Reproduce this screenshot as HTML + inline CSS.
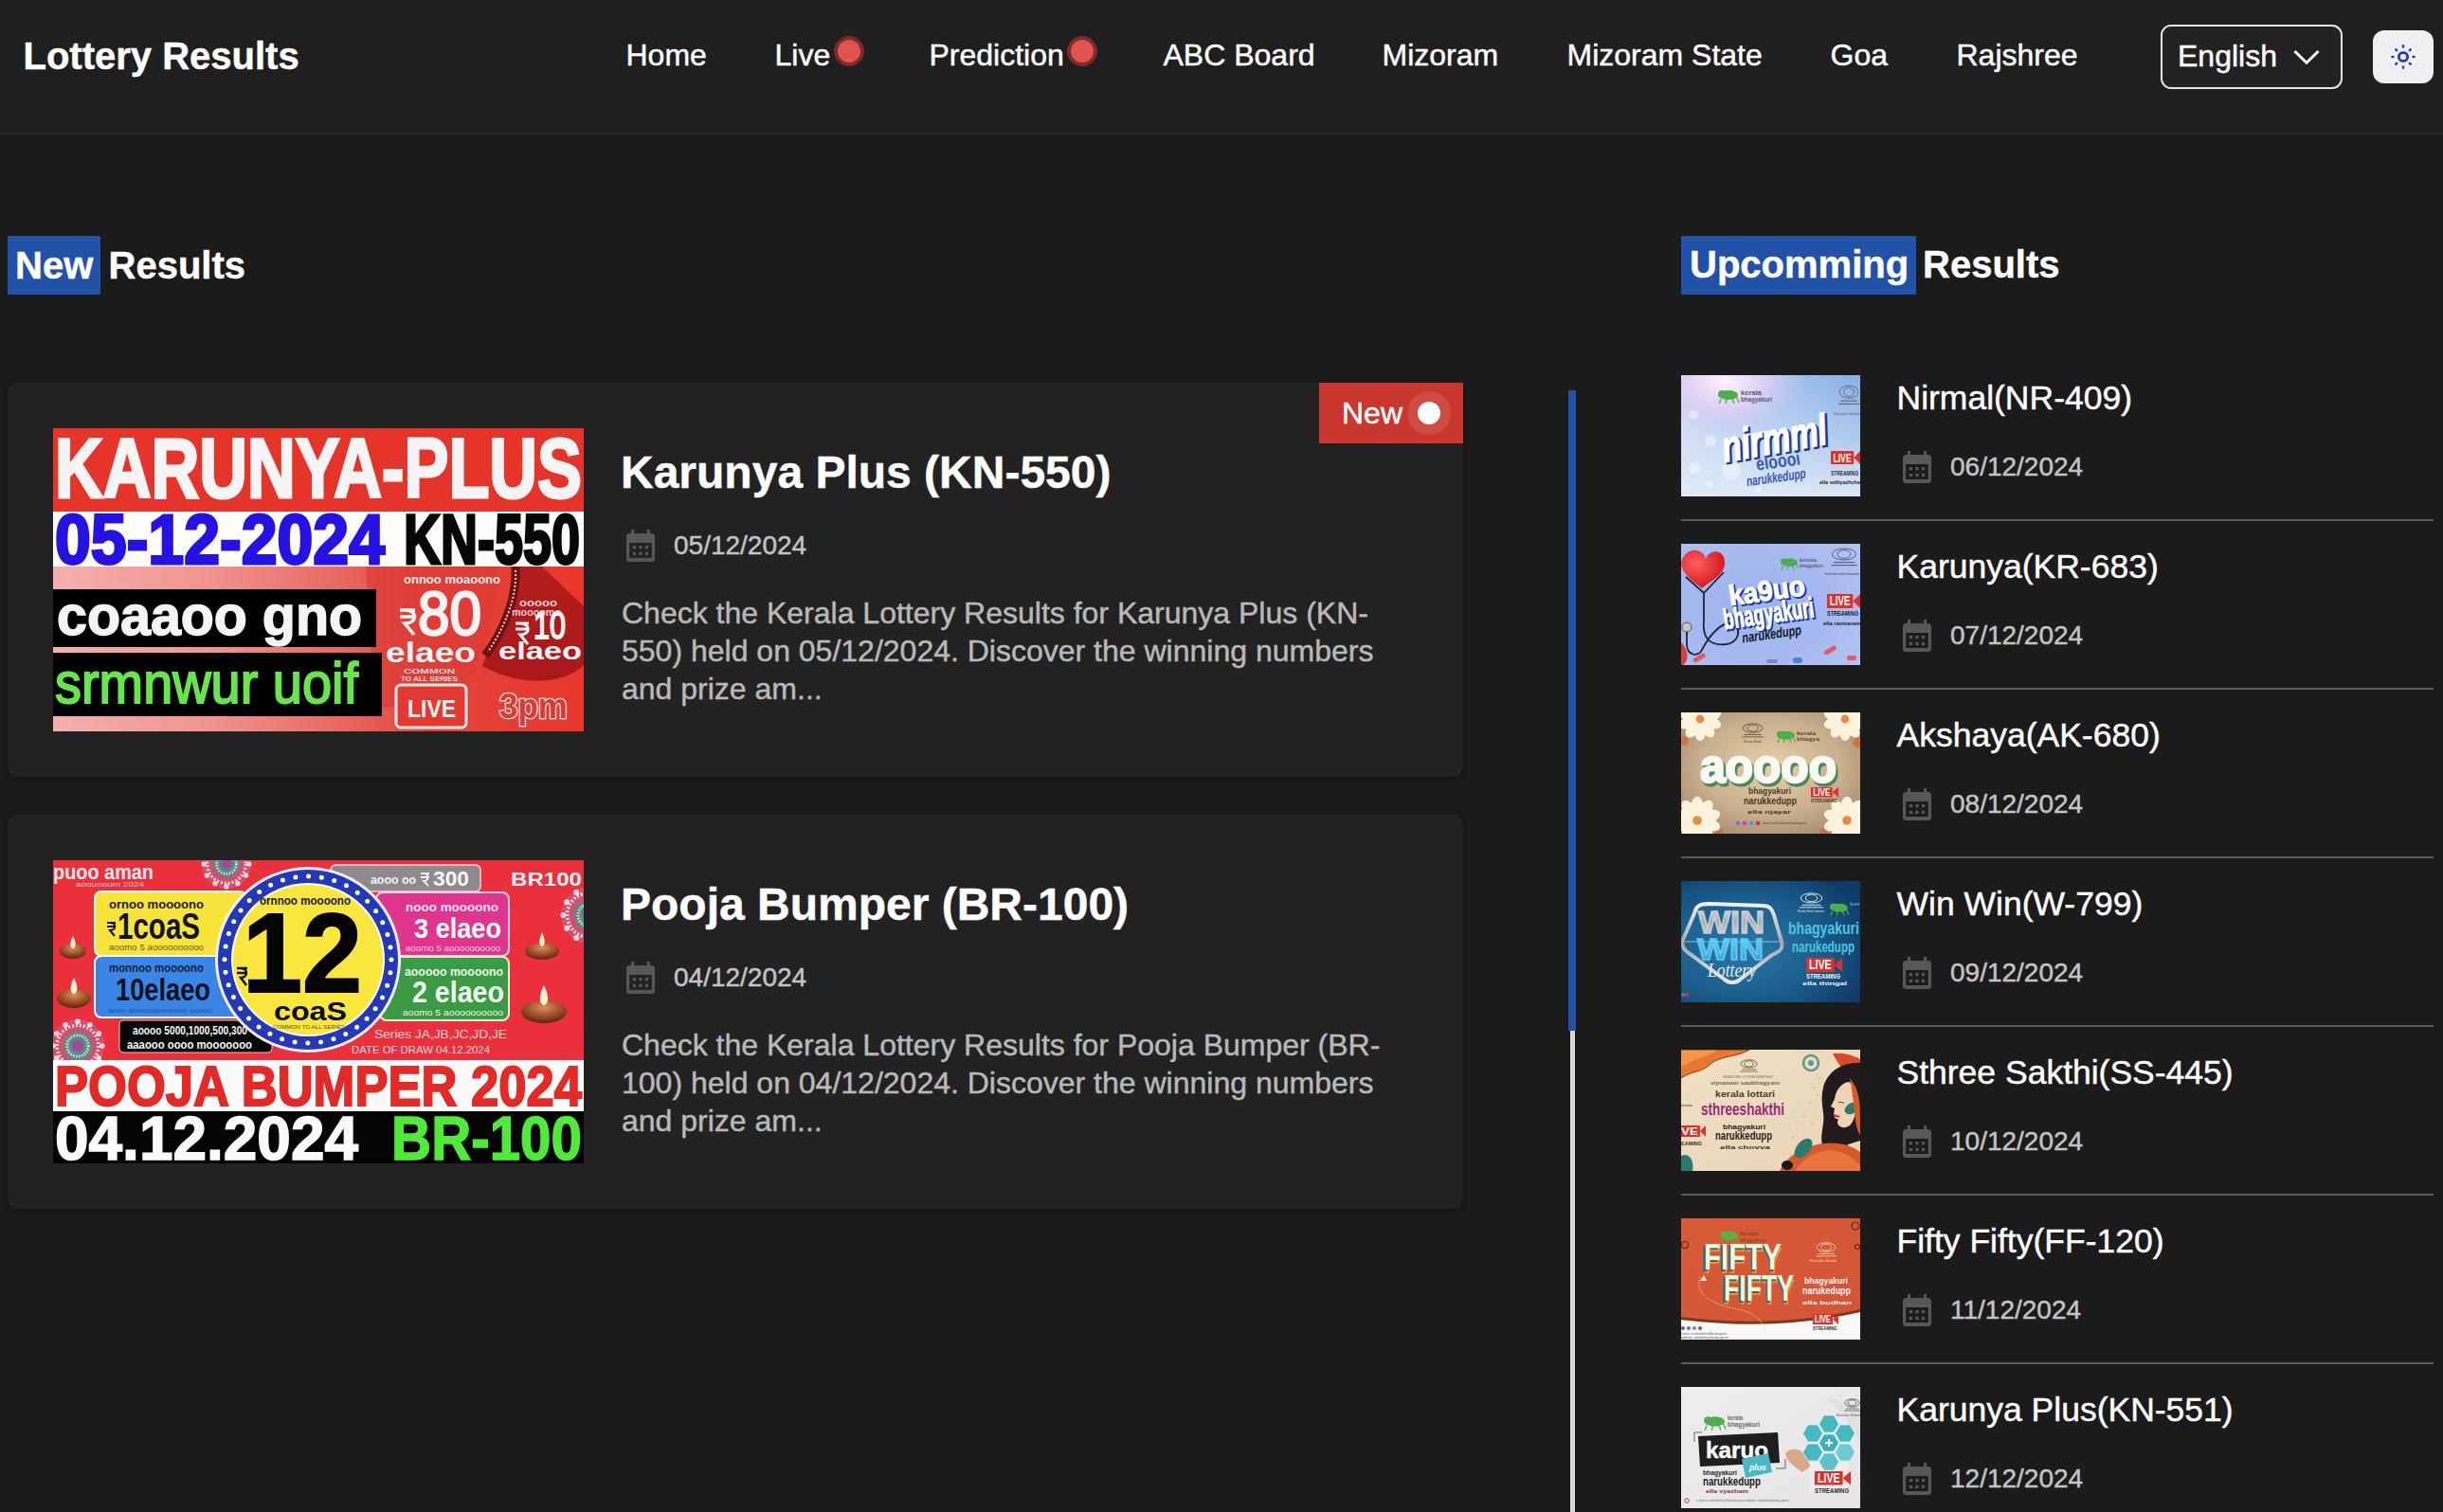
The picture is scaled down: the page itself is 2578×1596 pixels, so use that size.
<!DOCTYPE html>
<html><head><meta charset="utf-8">
<style>
*{margin:0;padding:0;box-sizing:border-box}
html,body{width:2578px;height:1596px;overflow:hidden;background:#1b1b1b;font-family:"Liberation Sans",sans-serif;color:#fff}
.a{position:absolute;white-space:nowrap;line-height:1;-webkit-text-stroke:0.45px currentColor}
.desc{-webkit-text-stroke:0.45px currentColor}
#hdr{position:absolute;left:0;top:0;width:2578px;height:142px;background:#1f1f1f}
.nav{font-size:32px;top:41.5px}
.dot{position:absolute;width:32px;height:32px;border-radius:50%;background:#e05350;border:4px solid #7a2c2b}
#lang{position:absolute;left:2280px;top:26px;width:192px;height:68px;border:2px solid #e4e4e4;border-radius:11px;background:#222}
#theme{position:absolute;left:2504px;top:32px;width:64px;height:56px;border-radius:12px;background:#f0f0f2}
.hbox{position:absolute;background:#2251a8}
.h2{font-size:40px;font-weight:bold}
.card{position:absolute;left:8px;width:1536px;height:416px;background:#222;border-radius:12px;box-shadow:0 3px 10px rgba(0,0,0,0.22)}
.img{position:absolute;left:48px;top:48px;width:560px;height:320px;overflow:hidden}
.ct{font-size:48px;font-weight:bold;left:655px}
.cd{font-size:28px;color:#c4c4c4;left:711px}
.cal{position:absolute}
.desc{position:absolute;left:656px;font-size:32px;line-height:40px;color:#b9b9b9;width:820px}
.badge{position:absolute;left:1384px;top:0;width:152px;height:64px;background:#c9352f;border-top-right-radius:0}
.th{position:absolute;left:1774px;width:189px;height:128px;overflow:hidden}
.lt{font-size:35.5px;left:2001.5px}
.ld{font-size:28px;color:#c4c4c4;left:2058px}
.div{position:absolute;left:1774px;width:794px;height:2px;background:#5a5a5a}
</style></head><body>
<div id="hdr"></div>
<div style="position:absolute;left:0;top:140px;width:2578px;height:2px;background:#242424"></div>
<div class="a" style="left:24.5px;top:39px;font-size:40px;font-weight:bold">Lottery Results</div>
<div class="a nav" style="left:660.5px">Home</div>
<div class="a nav" style="left:817.5px">Live</div>
<div class="dot" style="left:880px;top:38px"></div>
<div class="a nav" style="left:980.5px">Prediction</div>
<div class="dot" style="left:1126px;top:38px"></div>
<div class="a nav" style="left:1227.5px">ABC Board</div>
<div class="a nav" style="left:1458.5px">Mizoram</div>
<div class="a nav" style="left:1653.5px">Mizoram State</div>
<div class="a nav" style="left:1931.5px">Goa</div>
<div class="a nav" style="left:2064.5px">Rajshree</div>
<div id="lang"></div>
<div class="a" style="left:2298px;top:43px;font-size:32px">English</div>
<svg style="position:absolute;left:2418px;top:50px" width="32" height="22" viewBox="0 0 32 22"><path d="M3.5 4 L16 16.2 L28.5 4" fill="none" stroke="#fff" stroke-width="3"/></svg>
<div id="theme"></div>
<svg style="position:absolute;left:2520px;top:44px" width="32" height="32" viewBox="-16 -16 32 32"><circle cx="0" cy="0" r="4.6" fill="none" stroke="#1f48a8" stroke-width="3"/><g stroke="#1f48a8" stroke-width="2.6" stroke-linecap="round"><path d="M0 -11.6v1M0 10.6v1M-11.6 0h1M10.6 0h1M-7.7 -7.7l0.8 0.8M6.9 6.9l0.8 0.8M-7.7 7.7l0.8 -0.8M6.9 -6.9l0.8 -0.8"/></g></svg>

<div class="hbox" style="left:8px;top:249px;width:98px;height:62px"></div>
<div class="a h2" style="left:16px;top:259.5px">New</div>
<div class="a h2" style="left:114.5px;top:259.5px">Results</div>

<div class="card" style="top:404px">
  <div class="img" id="img1"><svg width="560" height="320" viewBox="0 0 560 320" font-family="Liberation Sans" font-weight="bold">
<defs>
<linearGradient id="k1" x1="0" y1="0" x2="1" y2="0"><stop offset="0" stop-color="#f4b0ae"/><stop offset="0.3" stop-color="#f0938e"/><stop offset="0.55" stop-color="#e8665f"/><stop offset="0.7" stop-color="#e2453d"/><stop offset="1" stop-color="#e8372c"/></linearGradient>
<linearGradient id="k2" x1="0" y1="0" x2="0" y2="1"><stop offset="0" stop-color="#b41d1c"/><stop offset="1" stop-color="#a8191a"/></linearGradient>
<linearGradient id="k3" x1="0" y1="0" x2="1" y2="0"><stop offset="0" stop-color="#f5b6b4"/><stop offset="1" stop-color="#e96a62"/></linearGradient>
</defs>
<rect width="560" height="88" fill="#e5352b"/>
<text x="2" y="73" font-size="89" fill="#f6f4f4" stroke="#f6f4f4" stroke-width="3" textLength="556" lengthAdjust="spacingAndGlyphs">KARUNYA-PLUS</text>
<rect y="88" width="560" height="58" fill="#fcfcfc"/>
<text x="2" y="143" font-size="74" fill="#2612e3" stroke="#2612e3" stroke-width="3" textLength="348" lengthAdjust="spacingAndGlyphs">05-12-2024</text>
<text x="370" y="143" font-size="74" fill="#070707" stroke="#070707" stroke-width="3" textLength="186" lengthAdjust="spacingAndGlyphs">KN-550</text>
<rect y="146" width="560" height="174" fill="url(#k1)"/>
<path d="M330 146 L470 146 C470 190 455 240 440 262 C420 285 380 292 340 296 Z" fill="#dc3b35" opacity="0.7"/>
<path d="M484 146 L516 146 L560 188 L560 250 C540 270 495 274 453 251 C468 215 486 180 484 146 Z" fill="url(#k2)"/>
<path d="M488 146 C490 180 475 215 456 240" stroke="#6e0f10" stroke-width="9" fill="none"/>
<path d="M488 150 C490 180 475 212 459 236" stroke="#f0d0d0" stroke-width="2" stroke-dasharray="2 2" fill="none"/>
<rect y="170" width="341" height="61" fill="#000"/>
<rect y="237" width="347" height="67" fill="#000"/>
<text x="4" y="218" font-size="60" fill="#f4f4f4" stroke="#f4f4f4" stroke-width="1.5" textLength="322" lengthAdjust="spacingAndGlyphs">coaaoo gno</text>
<text x="2" y="290" font-size="62" font-weight="normal" fill="#66e64a" stroke="#66e64a" stroke-width="2" textLength="320" lengthAdjust="spacingAndGlyphs">srmnwur uoif</text>
<text x="370" y="164" font-size="12" fill="#f8eaea" textLength="102" lengthAdjust="spacingAndGlyphs">onnoo moaoono</text>
<text x="385" y="218" font-size="64" font-weight="normal" fill="#fbf3f3" stroke="#fbf3f3" stroke-width="2.5" textLength="67" lengthAdjust="spacingAndGlyphs">80</text>
<path d="M366 192h16M366 199h16M371 192c14 0 14 14 0 14l10 12" stroke="#fbf3f3" stroke-width="3.5" fill="none"/>
<text x="351" y="247" font-size="30" fill="#fbf3f3" textLength="95" lengthAdjust="spacingAndGlyphs">elaeo</text>
<text x="370" y="259" font-size="7" fill="#f6d8d8" textLength="54" lengthAdjust="spacingAndGlyphs">COMMON</text>
<text x="367" y="267" font-size="7" fill="#f6d8d8" textLength="60" lengthAdjust="spacingAndGlyphs">TO ALL SERIES</text>
<rect x="362" y="271" width="74" height="45" rx="5" fill="#e23a32" stroke="#fbe8e8" stroke-width="3"/>
<text x="374" y="305" font-size="26" fill="#fbf3f3" textLength="51" lengthAdjust="spacingAndGlyphs">LIVE</text>
<text x="471" y="306" font-size="36" fill="#d83a34" stroke="#fbe8e8" stroke-width="2.5" paint-order="stroke" textLength="72" lengthAdjust="spacingAndGlyphs">3pm</text>
<text x="492" y="188" font-size="10" fill="#f6d0d0" textLength="40" lengthAdjust="spacingAndGlyphs">ooooo</text>
<text x="484" y="198" font-size="10" fill="#f6d0d0" textLength="52" lengthAdjust="spacingAndGlyphs">moooomo</text>
<text x="507" y="222" font-size="40" font-weight="normal" fill="#fbf3f3" stroke="#fbf3f3" stroke-width="1.8" textLength="34" lengthAdjust="spacingAndGlyphs">10</text>
<path d="M488 206h14M488 212h14M493 206c11 0 11 12 0 12l8 10" stroke="#fbf3f3" stroke-width="3" fill="none"/>
<text x="470" y="244" font-size="26" fill="#fbf3f3" textLength="88" lengthAdjust="spacingAndGlyphs">elaeo</text>
</svg></div>
</div>
<div class="card" style="top:860px">
  <div class="img" id="img2"><svg width="560" height="320" viewBox="0 0 560 320" font-family="Liberation Sans" font-weight="bold">
<defs>
<radialGradient id="dy" cx="0.5" cy="0.3" r="0.7"><stop offset="0" stop-color="#d8925a"/><stop offset="0.6" stop-color="#9a4a22"/><stop offset="1" stop-color="#5a2410"/></radialGradient>
<radialGradient id="rg" cx="0.5" cy="0.5" r="0.5"><stop offset="0" stop-color="#e8d070"/><stop offset="0.35" stop-color="#3aa0a0"/><stop offset="0.6" stop-color="#b04aa0"/><stop offset="0.8" stop-color="#f0b0d0"/><stop offset="1" stop-color="#e8303c" stop-opacity="0"/></radialGradient>
</defs>
<rect width="560" height="211" fill="#e9303c"/>
<circle cx="183" cy="4" r="26" fill="#c86a8a" opacity="0.55"/><circle cx="183" cy="4" r="20.3" fill="none" stroke="#f0e0f0" stroke-width="3.1" stroke-dasharray="2 2"/><circle cx="183" cy="4" r="14.3" fill="#3a9aa0" opacity="0.8"/><circle cx="183" cy="4" r="10.4" fill="none" stroke="#f4e4a0" stroke-width="2.6" stroke-dasharray="1.5 1.5"/><circle cx="183" cy="4" r="5.7" fill="#a04a90"/><circle cx="206.9" cy="4.0" r="2.6" fill="#f6d8e8"/><circle cx="203.7" cy="16.0" r="2.6" fill="#f6d8e8"/><circle cx="195.0" cy="24.7" r="2.6" fill="#f6d8e8"/><circle cx="183.0" cy="27.9" r="2.6" fill="#f6d8e8"/><circle cx="171.0" cy="24.7" r="2.6" fill="#f6d8e8"/><circle cx="162.3" cy="16.0" r="2.6" fill="#f6d8e8"/><circle cx="159.1" cy="4.0" r="2.6" fill="#f6d8e8"/><circle cx="162.3" cy="-8.0" r="2.6" fill="#f6d8e8"/><circle cx="171.0" cy="-16.7" r="2.6" fill="#f6d8e8"/><circle cx="183.0" cy="-19.9" r="2.6" fill="#f6d8e8"/><circle cx="195.0" cy="-16.7" r="2.6" fill="#f6d8e8"/><circle cx="203.7" cy="-8.0" r="2.6" fill="#f6d8e8"/>
<circle cx="26" cy="196" r="28" fill="#c86a8a" opacity="0.55"/><circle cx="26" cy="196" r="21.8" fill="none" stroke="#f0e0f0" stroke-width="3.4" stroke-dasharray="2 2"/><circle cx="26" cy="196" r="15.4" fill="#3a9aa0" opacity="0.8"/><circle cx="26" cy="196" r="11.2" fill="none" stroke="#f4e4a0" stroke-width="2.8" stroke-dasharray="1.5 1.5"/><circle cx="26" cy="196" r="6.2" fill="#a04a90"/><circle cx="51.8" cy="196.0" r="2.8" fill="#f6d8e8"/><circle cx="48.3" cy="208.9" r="2.8" fill="#f6d8e8"/><circle cx="38.9" cy="218.3" r="2.8" fill="#f6d8e8"/><circle cx="26.0" cy="221.8" r="2.8" fill="#f6d8e8"/><circle cx="13.1" cy="218.3" r="2.8" fill="#f6d8e8"/><circle cx="3.7" cy="208.9" r="2.8" fill="#f6d8e8"/><circle cx="0.2" cy="196.0" r="2.8" fill="#f6d8e8"/><circle cx="3.7" cy="183.1" r="2.8" fill="#f6d8e8"/><circle cx="13.1" cy="173.7" r="2.8" fill="#f6d8e8"/><circle cx="26.0" cy="170.2" r="2.8" fill="#f6d8e8"/><circle cx="38.9" cy="173.7" r="2.8" fill="#f6d8e8"/><circle cx="48.3" cy="183.1" r="2.8" fill="#f6d8e8"/>
<circle cx="566" cy="58" r="30" fill="#c86a8a" opacity="0.55"/><circle cx="566" cy="58" r="23.4" fill="none" stroke="#f0e0f0" stroke-width="3.6" stroke-dasharray="2 2"/><circle cx="566" cy="58" r="16.5" fill="#3a9aa0" opacity="0.8"/><circle cx="566" cy="58" r="12.0" fill="none" stroke="#f4e4a0" stroke-width="3.0" stroke-dasharray="1.5 1.5"/><circle cx="566" cy="58" r="6.6" fill="#a04a90"/><circle cx="593.6" cy="58.0" r="3.0" fill="#f6d8e8"/><circle cx="589.9" cy="71.8" r="3.0" fill="#f6d8e8"/><circle cx="579.8" cy="81.9" r="3.0" fill="#f6d8e8"/><circle cx="566.0" cy="85.6" r="3.0" fill="#f6d8e8"/><circle cx="552.2" cy="81.9" r="3.0" fill="#f6d8e8"/><circle cx="542.1" cy="71.8" r="3.0" fill="#f6d8e8"/><circle cx="538.4" cy="58.0" r="3.0" fill="#f6d8e8"/><circle cx="542.1" cy="44.2" r="3.0" fill="#f6d8e8"/><circle cx="552.2" cy="34.1" r="3.0" fill="#f6d8e8"/><circle cx="566.0" cy="30.4" r="3.0" fill="#f6d8e8"/><circle cx="579.8" cy="34.1" r="3.0" fill="#f6d8e8"/><circle cx="589.9" cy="44.2" r="3.0" fill="#f6d8e8"/>
<text x="0" y="20" font-size="22" fill="#fbeaea" textLength="106" lengthAdjust="spacingAndGlyphs">puoo aman</text>
<text x="24" y="27.5" font-size="8" font-weight="normal" fill="#f6c8c8" textLength="72" lengthAdjust="spacingAndGlyphs">aoouooum 2024</text>
<g id="dya">
<ellipse cx="21" cy="96" rx="14" ry="8" fill="url(#dy)"/>
<path d="M21 80 C17 88 18 92 21 93 C24 92 25 88 21 80 Z" fill="#fff4d0"/>
</g>
<ellipse cx="22" cy="146" rx="18" ry="10" fill="url(#dy)"/>
<path d="M22 124 C17 134 18 140 22 141 C26 140 27 134 22 124 Z" fill="#fff4d0"/>
<ellipse cx="516" cy="96" rx="18" ry="9" fill="url(#dy)"/>
<path d="M516 76 C512 85 513 90 516 91 C519 90 520 85 516 76 Z" fill="#fff4d0"/>
<ellipse cx="518" cy="160" rx="24" ry="12" fill="url(#dy)"/>
<path d="M518 132 C512 144 513 152 518 153 C523 152 524 144 518 132 Z" fill="#fff4d0"/>
<rect x="44" y="33" width="160" height="68" rx="7" fill="#f7e43a" stroke="#fff" stroke-width="2"/>
<rect x="44" y="101" width="160" height="65" rx="7" fill="#3a86e6" stroke="#fff" stroke-width="2"/>
<text x="59" y="51" font-size="13" fill="#201a10" textLength="100" lengthAdjust="spacingAndGlyphs">ornoo moooono</text>
<text x="68" y="83" font-size="38" fill="#111" textLength="87" lengthAdjust="spacingAndGlyphs">1coaS</text>
<path d="M57 66h9M57 70h9M60 66c7 0 7 8 0 8l5 6" stroke="#111" stroke-width="2" fill="none"/>
<text x="59" y="95" font-size="9" font-weight="normal" fill="#6a5a30" textLength="100" lengthAdjust="spacingAndGlyphs">aoomo 5 aoooooooooo</text>
<text x="59" y="118" font-size="13" fill="#102040" textLength="100" lengthAdjust="spacingAndGlyphs">monnoo moooono</text>
<text x="66" y="148" font-size="34" fill="#0a1020" textLength="100" lengthAdjust="spacingAndGlyphs">10elaeo</text>
<text x="58" y="161" font-size="8" font-weight="normal" fill="#2050a0" textLength="110" lengthAdjust="spacingAndGlyphs">aooo aoooooooooooo ooooo</text>
<rect x="70" y="169" width="161" height="34" rx="4" fill="#080808" stroke="#f6c0c0" stroke-width="1"/>
<text x="84" y="184" font-size="12" fill="#f4f4f4" textLength="121" lengthAdjust="spacingAndGlyphs">aoooo 5000,1000,500,300</text>
<text x="78" y="199" font-size="12" fill="#f4f4f4" textLength="132" lengthAdjust="spacingAndGlyphs">aaaooo oooo mooooooo</text>
<rect x="293" y="5" width="158" height="28" rx="5" fill="#8e8a8c" stroke="#f0d0d8" stroke-width="1.5"/>
<text x="335" y="25" font-size="12" fill="#f4f4f4" textLength="48" lengthAdjust="spacingAndGlyphs">aooo oo</text>
<path d="M388 14h9M388 18h9M391 14c6 0 6 8 0 8l5 5" stroke="#f4f4f4" stroke-width="1.8" fill="none"/><text x="401" y="27" font-size="22" fill="#fafafa" textLength="38" lengthAdjust="spacingAndGlyphs">300</text>

<rect x="341" y="34" width="140" height="67" rx="7" fill="#e0358f" stroke="#f8d0e0" stroke-width="2"/>
<rect x="345" y="102" width="136" height="67" rx="7" fill="#3c9a44" stroke="#e0f0d8" stroke-width="2"/>
<text x="372" y="54" font-size="13" fill="#fbe0f0" textLength="98" lengthAdjust="spacingAndGlyphs">nooo moooono</text>
<text x="381" y="82" font-size="30" fill="#fff" textLength="92" lengthAdjust="spacingAndGlyphs">3 elaeo</text>
<text x="372" y="96" font-size="9" font-weight="normal" fill="#fbd0e8" textLength="100" lengthAdjust="spacingAndGlyphs">aoomo 5 aoooooooooo</text>
<text x="371" y="122" font-size="13" fill="#e8f8e8" textLength="104" lengthAdjust="spacingAndGlyphs">aooooo moooono</text>
<text x="379" y="150" font-size="31" fill="#f4fff4" textLength="97" lengthAdjust="spacingAndGlyphs">2 elaeo</text>
<text x="369" y="164" font-size="9" font-weight="normal" fill="#e8f8e8" textLength="106" lengthAdjust="spacingAndGlyphs">aoomo 5 aoooooooooo</text>
<text x="483" y="27" font-size="21" fill="#fbf0f0" textLength="75" lengthAdjust="spacingAndGlyphs">BR100</text>
<text x="339" y="187.5" font-size="12" font-weight="normal" fill="#f8d8d8" textLength="140" lengthAdjust="spacingAndGlyphs">Series  JA,JB,JC,JD,JE</text>
<text x="315" y="203.5" font-size="11" font-weight="normal" fill="#f8d8d8" textLength="146" lengthAdjust="spacingAndGlyphs">DATE OF DRAW  04.12.2024</text>
<circle cx="269" cy="105" r="98" fill="#f4f0f8"/>
<circle cx="269" cy="105" r="95" fill="#2438b8"/>
<circle cx="269" cy="105" r="81" fill="#fff"/>
<circle cx="269" cy="105" r="79" fill="#f9e63e"/>
<circle cx="269" cy="105" r="88" fill="none" stroke="#fff" stroke-width="5" stroke-dasharray="0 13.82" stroke-linecap="round"/>
<text x="218" y="47" font-size="13" fill="#1a1a10" textLength="96" lengthAdjust="spacingAndGlyphs">ornnoo moooono</text>
<text x="200" y="139" font-size="118" fill="#050505" stroke="#050505" stroke-width="2" textLength="126" lengthAdjust="spacingAndGlyphs">12</text>
<path d="M194 114h11M194 119h11M198 114c8 0 8 10 0 10l6 8" stroke="#111" stroke-width="2.5" fill="none"/>
<text x="233" y="169" font-size="28" fill="#0a0a0a" textLength="77" lengthAdjust="spacingAndGlyphs">coaS</text>
<text x="232" y="178" font-size="6" font-weight="normal" fill="#605020" textLength="76" lengthAdjust="spacingAndGlyphs">COMMON TO ALL SERIES</text>
<rect y="211" width="560" height="54" fill="#fafafa"/>
<text x="2" y="259" font-size="60" fill="#e32a27" stroke="#e32a27" stroke-width="2" textLength="556" lengthAdjust="spacingAndGlyphs">POOJA BUMPER 2024</text>
<rect y="265" width="560" height="55" fill="#050505"/>
<text x="2" y="316" font-size="64" fill="#fafafa" stroke="#fafafa" stroke-width="1.5" textLength="320" lengthAdjust="spacingAndGlyphs">04.12.2024</text>
<text x="357" y="316" font-size="64" fill="#50ea38" stroke="#50ea38" stroke-width="1.5" textLength="201" lengthAdjust="spacingAndGlyphs">BR-100</text>
</svg></div>
</div>

<div style="position:absolute;left:1392px;top:404px;width:152px;height:64px;background:#c9372f"></div>
<div class="a" style="left:1416px;top:419.5px;font-size:32px">New</div>
<div style="position:absolute;left:1485px;top:413px;width:46px;height:46px;border-radius:50%;background:rgba(255,255,255,0.1)"></div>
<div style="position:absolute;left:1496px;top:424px;width:24px;height:24px;border-radius:50%;background:#fff"></div>
<div class="hbox" style="left:1774px;top:249px;width:248px;height:62px"></div>
<div class="a h2" style="left:1783px;top:259px">Upcomming</div>
<div class="a h2" style="left:2029px;top:259px">Results</div>

<div style="position:absolute;left:1655px;top:412px;width:8px;height:676px;background:#2251a8"></div>
<div style="position:absolute;left:1657px;top:1088px;width:5px;height:508px;background:#d8d8d8"></div>

<div class="a ct" style="top:475px">Karunya Plus (KN-550)</div>
<svg class="cal" style="left:661px;top:559px" width="30" height="34" viewBox="0 0 30 34"><path fill="#575757" fill-rule="evenodd" d="M5 0h3v4h14V0h3v4h1.5A3.5 3.5 0 0 1 30 7.5v23A3.5 3.5 0 0 1 26.5 34h-23A3.5 3.5 0 0 1 0 30.5v-23A3.5 3.5 0 0 1 3.5 4H5z M3.2 14v16h23.6V14z"/><g fill="#575757"><rect x="6.8" y="17" width="3.3" height="3.3"/><rect x="13.3" y="17" width="3.3" height="3.3"/><rect x="19.8" y="17" width="3.3" height="3.3"/><rect x="6.8" y="23.8" width="3.3" height="3.3"/><rect x="13.3" y="23.8" width="3.3" height="3.3"/><rect x="19.8" y="23.8" width="3.3" height="3.3"/></g></svg>
<div class="a cd" style="top:562px">05/12/2024</div>
<div class="desc" style="top:627px">Check the Kerala Lottery Results for Karunya Plus (KN-<br>550) held on 05/12/2024. Discover the winning numbers<br>and prize am...</div>
<div class="a ct" style="top:931px">Pooja Bumper (BR-100)</div>
<svg class="cal" style="left:661px;top:1015px" width="30" height="34" viewBox="0 0 30 34"><path fill="#575757" fill-rule="evenodd" d="M5 0h3v4h14V0h3v4h1.5A3.5 3.5 0 0 1 30 7.5v23A3.5 3.5 0 0 1 26.5 34h-23A3.5 3.5 0 0 1 0 30.5v-23A3.5 3.5 0 0 1 3.5 4H5z M3.2 14v16h23.6V14z"/><g fill="#575757"><rect x="6.8" y="17" width="3.3" height="3.3"/><rect x="13.3" y="17" width="3.3" height="3.3"/><rect x="19.8" y="17" width="3.3" height="3.3"/><rect x="6.8" y="23.8" width="3.3" height="3.3"/><rect x="13.3" y="23.8" width="3.3" height="3.3"/><rect x="19.8" y="23.8" width="3.3" height="3.3"/></g></svg>
<div class="a cd" style="top:1018px">04/12/2024</div>
<div class="desc" style="top:1083px">Check the Kerala Lottery Results for Pooja Bumper (BR-<br>100) held on 04/12/2024. Discover the winning numbers<br>and prize am...</div>
<div class="th" id="t1" style="top:396px"><svg width="189" height="128" viewBox="0 0 189 128" font-family="Liberation Sans" font-weight="bold"><defs>
<linearGradient id="n1" x1="0" y1="0" x2="1" y2="0.6"><stop offset="0" stop-color="#cfd6f4"/><stop offset="0.5" stop-color="#9cbdec"/><stop offset="1" stop-color="#6f9fe2"/></linearGradient>
<linearGradient id="n2" x1="0" y1="0" x2="0" y2="1"><stop offset="0" stop-color="#ffffff" stop-opacity="0"/><stop offset="1" stop-color="#e8f0fa" stop-opacity="0.9"/></linearGradient>
<radialGradient id="n3" cx="0.25" cy="0.05" r="0.45"><stop offset="0" stop-color="#fff4ff"/><stop offset="0.5" stop-color="#e4d0f4" stop-opacity="0.8"/><stop offset="1" stop-color="#c8c0f0" stop-opacity="0"/></radialGradient>
</defs>
<rect width="189" height="128" fill="url(#n1)"/><rect width="189" height="128" fill="url(#n2)"/><rect width="189" height="128" fill="url(#n3)"/>
<g fill="#f4f8ff" opacity="0.55"><circle cx="13" cy="42" r="5"/><circle cx="31" cy="70" r="6"/><circle cx="14" cy="98" r="6"/><circle cx="53" cy="101" r="10"/><circle cx="30" cy="115" r="3.5"/><circle cx="82" cy="121" r="3"/></g>
<g transform="translate(39,13) scale(1.0)"><ellipse cx="11" cy="8" rx="10" ry="5" fill="#4cae4c"/><circle cx="4" cy="7" r="4" fill="#4cae4c"/><path d="M3 12 L1 17 M9 12 L8 17 M15 12 L17 17 M19 9 L22 16" stroke="#4cae4c" stroke-width="1.3"/></g><text x="63" y="21" font-size="7" font-weight="bold" fill="#5a5a7a" textLength="22" lengthAdjust="spacingAndGlyphs" >kerala</text><text x="63" y="28" font-size="7" font-weight="bold" fill="#5a5a7a" textLength="33" lengthAdjust="spacingAndGlyphs" >bhagyakuri</text><g fill="none" stroke="#6a7080" stroke-width="1"><ellipse cx="177.0" cy="17.7" rx="9.9" ry="6.6"/><ellipse cx="177.0" cy="17.7" rx="5.5" ry="4.84"/></g><rect x="168.2" y="26.5" width="17.6" height="1.3199999999999998" fill="#6a7080"/><rect x="166" y="29.8" width="22" height="1.3199999999999998" fill="#6a7080"/><text x="161" y="42" font-size="4" font-weight="normal" fill="#5a6070" textLength="28" lengthAdjust="spacingAndGlyphs" >Kerala State</text>
<g transform="rotate(-10 100 60)"><text x="43" y="84" font-size="46" font-style="italic" fill="#24388a" stroke="#24388a" stroke-width="2" textLength="112" lengthAdjust="spacingAndGlyphs">nirmml</text><text x="41" y="82" font-size="46" font-style="italic" fill="#fff" stroke="#fff" stroke-width="1.2" textLength="112" lengthAdjust="spacingAndGlyphs">nirmml</text></g>
<text transform="rotate(-8 100 100)" x="80" y="98" font-size="20" font-weight="bold" fill="#3a5aaa" textLength="47" lengthAdjust="spacingAndGlyphs" >eloooi</text><text transform="rotate(-8 100 110)" x="69" y="113" font-size="15" font-weight="bold" fill="#3a5aaa" textLength="63" lengthAdjust="spacingAndGlyphs" font-style="italic">narukkedupp</text><rect x="158" y="80" width="24.2" height="14" fill="#e0302a"/><text x="160.4" y="91.5" font-size="13.3" fill="#fff" textLength="19.3" lengthAdjust="spacingAndGlyphs">LIVE</text><path d="M182.2 87.0 L189.0 80.0 L189.0 94.0 Z" fill="#e0302a"/><text x="158.0" y="106.0" font-size="6.5" fill="#303848" textLength="29.4" lengthAdjust="spacingAndGlyphs">STREAMING</text><text x="146" y="115" font-size="5" font-weight="bold" fill="#222" textLength="43" lengthAdjust="spacingAndGlyphs" >ella velliyazhcha</text></svg></div>
<div class="a lt" style="top:403px">Nirmal(NR-409)</div>
<svg class="cal" style="left:2008px;top:476px" width="30" height="34" viewBox="0 0 30 34"><path fill="#575757" fill-rule="evenodd" d="M5 0h3v4h14V0h3v4h1.5A3.5 3.5 0 0 1 30 7.5v23A3.5 3.5 0 0 1 26.5 34h-23A3.5 3.5 0 0 1 0 30.5v-23A3.5 3.5 0 0 1 3.5 4H5z M3.2 14v16h23.6V14z"/><g fill="#575757"><rect x="6.8" y="17" width="3.3" height="3.3"/><rect x="13.3" y="17" width="3.3" height="3.3"/><rect x="19.8" y="17" width="3.3" height="3.3"/><rect x="6.8" y="23.8" width="3.3" height="3.3"/><rect x="13.3" y="23.8" width="3.3" height="3.3"/><rect x="19.8" y="23.8" width="3.3" height="3.3"/></g></svg>
<div class="a ld" style="top:479px">06/12/2024</div>
<div class="div" style="top:548px"></div>
<div class="th" id="t2" style="top:574px"><svg width="189" height="128" viewBox="0 0 189 128" font-family="Liberation Sans" font-weight="bold"><defs>
<radialGradient id="k21" cx="0.4" cy="0.5" r="0.8"><stop offset="0" stop-color="#9cb2ec"/><stop offset="0.6" stop-color="#a8baf0"/><stop offset="1" stop-color="#b4c4f2"/></radialGradient>
<radialGradient id="k22" cx="0.35" cy="0.35" r="0.6"><stop offset="0" stop-color="#ff6060"/><stop offset="1" stop-color="#d81f24"/></radialGradient>
</defs>
<rect width="189" height="128" fill="url(#k21)"/>
<path d="M0 20 C4 2 24 4 26 16 C30 4 48 6 46 22 C44 34 30 40 22 47 C14 40 0 32 0 20 Z" fill="url(#k22)"/>
<path d="M5 35 L24 52 L45 30 M24 52 L24 80 C22 100 30 108 48 106 C60 104 64 92 56 86 C46 78 30 96 22 112 C18 120 6 118 6 106 L6 92" stroke="#1a2438" stroke-width="1.8" fill="none"/>
<circle cx="6" cy="88" r="5" fill="#c8c8c8" stroke="#555" stroke-width="1"/>
<g transform="translate(105,13) scale(0.85)"><ellipse cx="11" cy="8" rx="10" ry="5" fill="#4cae4c"/><circle cx="4" cy="7" r="4" fill="#4cae4c"/><path d="M3 12 L1 17 M9 12 L8 17 M15 12 L17 17 M19 9 L22 16" stroke="#4cae4c" stroke-width="1.3"/></g><text x="125" y="19" font-size="6" font-weight="bold" fill="#5a6080" textLength="18" lengthAdjust="spacingAndGlyphs" >kerala</text><text x="125" y="25" font-size="6" font-weight="bold" fill="#5a6080" textLength="25" lengthAdjust="spacingAndGlyphs" >bhagyakuri</text><g fill="none" stroke="#5a6080" stroke-width="1"><ellipse cx="172.0" cy="11.0" rx="12.6" ry="6.0"/><ellipse cx="172.0" cy="11.0" rx="7.0" ry="4.4"/></g><rect x="160.8" y="19.0" width="22.400000000000002" height="1.2" fill="#5a6080"/><rect x="158" y="22.0" width="28" height="1.2" fill="#5a6080"/><text x="152" y="33" font-size="3.5" font-weight="normal" fill="#333" textLength="36" lengthAdjust="spacingAndGlyphs" >Kerala State Lotteries Department</text>
<g transform="rotate(-8 90 65)"><text x="53.5" y="61.5" font-size="30" fill="#1c3a9a" stroke="#1c3a9a" stroke-width="2" textLength="81" lengthAdjust="spacingAndGlyphs">ka9uo</text><text x="52" y="60" font-size="30" fill="#fff" stroke="#fff" stroke-width="1" textLength="81" lengthAdjust="spacingAndGlyphs">ka9uo</text>
<text x="44.5" y="85.5" font-size="30" fill="#1c3a9a" stroke="#1c3a9a" stroke-width="2" textLength="96" lengthAdjust="spacingAndGlyphs">bhagyakuri</text><text x="43" y="84" font-size="30" fill="#fff" stroke="#fff" stroke-width="1" textLength="96" lengthAdjust="spacingAndGlyphs">bhagyakuri</text></g>
<text transform="rotate(-8 90 95)" x="64" y="101" font-size="15" font-weight="bold" fill="#101828" textLength="63" lengthAdjust="spacingAndGlyphs" font-style="italic">narukedupp</text><rect x="154" y="53" width="27.3" height="15" fill="#e0302a"/><text x="156.7" y="65.3" font-size="14.2" fill="#fff" textLength="21.8" lengthAdjust="spacingAndGlyphs">LIVE</text><path d="M181.3 60.5 L189.0 53.0 L189.0 68.0 Z" fill="#e0302a"/><text x="154.0" y="75.5" font-size="7.2" fill="#1a2438" textLength="33.2" lengthAdjust="spacingAndGlyphs">STREAMING</text><text x="150" y="86" font-size="5.5" font-weight="bold" fill="#222" textLength="39" lengthAdjust="spacingAndGlyphs" >ella ravivaram</text>
<g opacity="0.9"><rect x="12" y="118" width="14" height="5" rx="2.5" fill="#e85050" transform="rotate(-30 19 120)"/><rect x="150" y="110" width="14" height="5" rx="2.5" fill="#e85050" transform="rotate(-30 157 112)"/><rect x="175" y="118" width="10" height="5" rx="2.5" fill="#e85050"/><rect x="90" y="122" width="12" height="4" rx="2" fill="#8a78c8"/><rect x="118" y="120" width="10" height="6" rx="3" fill="#4878d8"/><path d="M0 104 C6 110 10 122 2 128 L0 128 Z" fill="#d83030"/></g>
</svg></div>
<div class="a lt" style="top:581px">Karunya(KR-683)</div>
<svg class="cal" style="left:2008px;top:654px" width="30" height="34" viewBox="0 0 30 34"><path fill="#575757" fill-rule="evenodd" d="M5 0h3v4h14V0h3v4h1.5A3.5 3.5 0 0 1 30 7.5v23A3.5 3.5 0 0 1 26.5 34h-23A3.5 3.5 0 0 1 0 30.5v-23A3.5 3.5 0 0 1 3.5 4H5z M3.2 14v16h23.6V14z"/><g fill="#575757"><rect x="6.8" y="17" width="3.3" height="3.3"/><rect x="13.3" y="17" width="3.3" height="3.3"/><rect x="19.8" y="17" width="3.3" height="3.3"/><rect x="6.8" y="23.8" width="3.3" height="3.3"/><rect x="13.3" y="23.8" width="3.3" height="3.3"/><rect x="19.8" y="23.8" width="3.3" height="3.3"/></g></svg>
<div class="a ld" style="top:657px">07/12/2024</div>
<div class="div" style="top:726px"></div>
<div class="th" id="t3" style="top:752px"><svg width="189" height="128" viewBox="0 0 189 128" font-family="Liberation Sans" font-weight="bold"><defs>
<radialGradient id="a31" cx="0.5" cy="0.45" r="0.65"><stop offset="0" stop-color="#e8d0a8"/><stop offset="0.6" stop-color="#c9b08e"/><stop offset="1" stop-color="#a4886c"/></radialGradient>
</defs>
<rect width="189" height="128" fill="url(#a31)"/>
<g fill="#d86838" opacity="0.8"><circle cx="3" cy="30" r="5"/><circle cx="186" cy="32" r="5"/><circle cx="5" cy="100" r="5"/><circle cx="186" cy="100" r="4"/><circle cx="40" cy="126" r="4"/><circle cx="150" cy="126" r="4"/></g>
<ellipse cx="20" cy="-5.1" rx="6.2" ry="11.0" transform="rotate(0 20 7)" fill="#fdf2dc"/><ellipse cx="20" cy="-5.1" rx="6.2" ry="11.0" transform="rotate(36 20 7)" fill="#fdf2dc"/><ellipse cx="20" cy="-5.1" rx="6.2" ry="11.0" transform="rotate(72 20 7)" fill="#fdf2dc"/><ellipse cx="20" cy="-5.1" rx="6.2" ry="11.0" transform="rotate(108 20 7)" fill="#fdf2dc"/><ellipse cx="20" cy="-5.1" rx="6.2" ry="11.0" transform="rotate(144 20 7)" fill="#fdf2dc"/><ellipse cx="20" cy="-5.1" rx="6.2" ry="11.0" transform="rotate(180 20 7)" fill="#fdf2dc"/><ellipse cx="20" cy="-5.1" rx="6.2" ry="11.0" transform="rotate(216 20 7)" fill="#fdf2dc"/><ellipse cx="20" cy="-5.1" rx="6.2" ry="11.0" transform="rotate(252 20 7)" fill="#fdf2dc"/><ellipse cx="20" cy="-5.1" rx="6.2" ry="11.0" transform="rotate(288 20 7)" fill="#fdf2dc"/><ellipse cx="20" cy="-5.1" rx="6.2" ry="11.0" transform="rotate(324 20 7)" fill="#fdf2dc"/><circle cx="20" cy="7" r="4.4" fill="#e88a40"/><ellipse cx="173" cy="-5.1" rx="6.2" ry="11.0" transform="rotate(0 173 7)" fill="#fdf2dc"/><ellipse cx="173" cy="-5.1" rx="6.2" ry="11.0" transform="rotate(36 173 7)" fill="#fdf2dc"/><ellipse cx="173" cy="-5.1" rx="6.2" ry="11.0" transform="rotate(72 173 7)" fill="#fdf2dc"/><ellipse cx="173" cy="-5.1" rx="6.2" ry="11.0" transform="rotate(108 173 7)" fill="#fdf2dc"/><ellipse cx="173" cy="-5.1" rx="6.2" ry="11.0" transform="rotate(144 173 7)" fill="#fdf2dc"/><ellipse cx="173" cy="-5.1" rx="6.2" ry="11.0" transform="rotate(180 173 7)" fill="#fdf2dc"/><ellipse cx="173" cy="-5.1" rx="6.2" ry="11.0" transform="rotate(216 173 7)" fill="#fdf2dc"/><ellipse cx="173" cy="-5.1" rx="6.2" ry="11.0" transform="rotate(252 173 7)" fill="#fdf2dc"/><ellipse cx="173" cy="-5.1" rx="6.2" ry="11.0" transform="rotate(288 173 7)" fill="#fdf2dc"/><ellipse cx="173" cy="-5.1" rx="6.2" ry="11.0" transform="rotate(324 173 7)" fill="#fdf2dc"/><circle cx="173" cy="7" r="4.4" fill="#e88a40"/><ellipse cx="17" cy="100.8" rx="6.7" ry="12.0" transform="rotate(0 17 114)" fill="#fdf2dc"/><ellipse cx="17" cy="100.8" rx="6.7" ry="12.0" transform="rotate(36 17 114)" fill="#fdf2dc"/><ellipse cx="17" cy="100.8" rx="6.7" ry="12.0" transform="rotate(72 17 114)" fill="#fdf2dc"/><ellipse cx="17" cy="100.8" rx="6.7" ry="12.0" transform="rotate(108 17 114)" fill="#fdf2dc"/><ellipse cx="17" cy="100.8" rx="6.7" ry="12.0" transform="rotate(144 17 114)" fill="#fdf2dc"/><ellipse cx="17" cy="100.8" rx="6.7" ry="12.0" transform="rotate(180 17 114)" fill="#fdf2dc"/><ellipse cx="17" cy="100.8" rx="6.7" ry="12.0" transform="rotate(216 17 114)" fill="#fdf2dc"/><ellipse cx="17" cy="100.8" rx="6.7" ry="12.0" transform="rotate(252 17 114)" fill="#fdf2dc"/><ellipse cx="17" cy="100.8" rx="6.7" ry="12.0" transform="rotate(288 17 114)" fill="#fdf2dc"/><ellipse cx="17" cy="100.8" rx="6.7" ry="12.0" transform="rotate(324 17 114)" fill="#fdf2dc"/><circle cx="17" cy="114" r="4.8" fill="#e88a40"/><ellipse cx="175" cy="100.8" rx="6.7" ry="12.0" transform="rotate(0 175 114)" fill="#fdf2dc"/><ellipse cx="175" cy="100.8" rx="6.7" ry="12.0" transform="rotate(36 175 114)" fill="#fdf2dc"/><ellipse cx="175" cy="100.8" rx="6.7" ry="12.0" transform="rotate(72 175 114)" fill="#fdf2dc"/><ellipse cx="175" cy="100.8" rx="6.7" ry="12.0" transform="rotate(108 175 114)" fill="#fdf2dc"/><ellipse cx="175" cy="100.8" rx="6.7" ry="12.0" transform="rotate(144 175 114)" fill="#fdf2dc"/><ellipse cx="175" cy="100.8" rx="6.7" ry="12.0" transform="rotate(180 175 114)" fill="#fdf2dc"/><ellipse cx="175" cy="100.8" rx="6.7" ry="12.0" transform="rotate(216 175 114)" fill="#fdf2dc"/><ellipse cx="175" cy="100.8" rx="6.7" ry="12.0" transform="rotate(252 175 114)" fill="#fdf2dc"/><ellipse cx="175" cy="100.8" rx="6.7" ry="12.0" transform="rotate(288 175 114)" fill="#fdf2dc"/><ellipse cx="175" cy="100.8" rx="6.7" ry="12.0" transform="rotate(324 175 114)" fill="#fdf2dc"/><circle cx="175" cy="114" r="4.8" fill="#e88a40"/><g fill="none" stroke="#6a5a48" stroke-width="1"><ellipse cx="75.5" cy="16.6" rx="10.35" ry="4.8"/><ellipse cx="75.5" cy="16.6" rx="5.75" ry="3.52"/></g><rect x="66.3" y="23.0" width="18.400000000000002" height="0.96" fill="#6a5a48"/><rect x="64" y="25.4" width="23" height="0.96" fill="#6a5a48"/><text x="66" y="32" font-size="4" font-weight="normal" fill="#4a3a30" textLength="19" lengthAdjust="spacingAndGlyphs" >Kerala State</text><g transform="translate(101,17) scale(0.9)"><ellipse cx="11" cy="8" rx="10" ry="5" fill="#4cae4c"/><circle cx="4" cy="7" r="4" fill="#4cae4c"/><path d="M3 12 L1 17 M9 12 L8 17 M15 12 L17 17 M19 9 L22 16" stroke="#4cae4c" stroke-width="1.3"/></g><text x="122" y="24" font-size="6" font-weight="bold" fill="#5a4a3a" textLength="20" lengthAdjust="spacingAndGlyphs" >kerala</text><text x="122" y="30" font-size="6" font-weight="bold" fill="#5a4a3a" textLength="24" lengthAdjust="spacingAndGlyphs" >bhagya</text>
<text x="22" y="77" font-size="50" fill="#4a8a5a" stroke="#4a8a5a" stroke-width="3" textLength="144" lengthAdjust="spacingAndGlyphs">aoooo</text><text x="20" y="74" font-size="50" fill="#f8f8f4" stroke="#f8f8f4" stroke-width="2.5" textLength="144" lengthAdjust="spacingAndGlyphs">aoooo</text>
<text x="71" y="86" font-size="9" font-weight="bold" fill="#4a3828" textLength="45" lengthAdjust="spacingAndGlyphs" >bhagyakuri</text><text x="66" y="97" font-size="11" font-weight="bold" fill="#4a3828" textLength="56" lengthAdjust="spacingAndGlyphs" >narukkedupp</text><text x="70" y="107" font-size="5.5" font-weight="bold" fill="#4a3828" textLength="46" lengthAdjust="spacingAndGlyphs" >ella njayar</text><rect x="137" y="79" width="22.6" height="10.5" fill="#e0302a"/><text x="139.3" y="87.6" font-size="10.0" fill="#fff" textLength="18.1" lengthAdjust="spacingAndGlyphs">LIVE</text><path d="M159.6 84.2 L166.0 79.0 L166.0 89.5 Z" fill="#e0302a"/><text x="137.0" y="95.0" font-size="5.2" fill="#4a3828" textLength="27.5" lengthAdjust="spacingAndGlyphs">STREAMING</text>
<g fill="#6a78c8"><circle cx="60" cy="117" r="2.3"/><circle cx="67" cy="117" r="2.3" fill="#c04898"/><circle cx="74" cy="117" r="2.3" fill="#4898d8"/><circle cx="81" cy="117" r="2.3" fill="#c83838"/></g><text x="86" y="118" font-size="3.5" font-weight="normal" fill="#4a3828" textLength="46" lengthAdjust="spacingAndGlyphs" >email: cru.dir.lotteries@kerala.gov.in</text></svg></div>
<div class="a lt" style="top:759px">Akshaya(AK-680)</div>
<svg class="cal" style="left:2008px;top:832px" width="30" height="34" viewBox="0 0 30 34"><path fill="#575757" fill-rule="evenodd" d="M5 0h3v4h14V0h3v4h1.5A3.5 3.5 0 0 1 30 7.5v23A3.5 3.5 0 0 1 26.5 34h-23A3.5 3.5 0 0 1 0 30.5v-23A3.5 3.5 0 0 1 3.5 4H5z M3.2 14v16h23.6V14z"/><g fill="#575757"><rect x="6.8" y="17" width="3.3" height="3.3"/><rect x="13.3" y="17" width="3.3" height="3.3"/><rect x="19.8" y="17" width="3.3" height="3.3"/><rect x="6.8" y="23.8" width="3.3" height="3.3"/><rect x="13.3" y="23.8" width="3.3" height="3.3"/><rect x="19.8" y="23.8" width="3.3" height="3.3"/></g></svg>
<div class="a ld" style="top:835px">08/12/2024</div>
<div class="div" style="top:904px"></div>
<div class="th" id="t4" style="top:930px"><svg width="189" height="128" viewBox="0 0 189 128" font-family="Liberation Sans" font-weight="bold"><defs>
<radialGradient id="w41" cx="0.35" cy="0.55" r="0.75"><stop offset="0" stop-color="#2a7aa8"/><stop offset="0.6" stop-color="#1a5a88"/><stop offset="1" stop-color="#0e3a68"/></radialGradient>
<linearGradient id="w42" x1="0" y1="0" x2="0" y2="1"><stop offset="0" stop-color="#f0f0f0"/><stop offset="0.5" stop-color="#a0a8b0"/><stop offset="1" stop-color="#e8e8e8"/></linearGradient>
<linearGradient id="w43" x1="0" y1="0" x2="0" y2="1"><stop offset="0" stop-color="#70e0f8"/><stop offset="1" stop-color="#2890d0"/></linearGradient>
</defs>
<rect width="189" height="128" fill="url(#w41)"/>
<path d="M14 34 C16 26 20 24 30 24 L86 26 C94 26 96 30 98 36 L106 64 C108 72 104 74 96 78 L62 104 C58 108 50 108 46 104 L8 76 C2 72 0 68 2 62 Z" fill="none" stroke="url(#w42)" stroke-width="4"/>
<line x1="4" y1="64" x2="104" y2="64" stroke="#c0e8ff" stroke-width="1" opacity="0.7"/>
<text x="18" y="55" font-size="34" fill="url(#w42)" stroke="#c8ccd0" stroke-width="1.6" textLength="70" lengthAdjust="spacingAndGlyphs">WIN</text>
<text x="17" y="83" font-size="31" fill="url(#w43)" stroke="#60c8f0" stroke-width="1.6" textLength="70" lengthAdjust="spacingAndGlyphs">WIN</text>
<text x="28" y="101" font-size="20" font-style="italic" font-weight="normal" font-family="Liberation Serif" fill="#e8eef0" textLength="51" lengthAdjust="spacingAndGlyphs">Lottery</text>
<g fill="none" stroke="#d8e4f0" stroke-width="1"><ellipse cx="137.5" cy="17.95" rx="11.25" ry="5.1"/><ellipse cx="137.5" cy="17.95" rx="6.25" ry="3.74"/></g><rect x="127.5" y="24.75" width="20.0" height="1.02" fill="#d8e4f0"/><rect x="125" y="27.3" width="25" height="1.02" fill="#d8e4f0"/><text x="123" y="33" font-size="3.5" font-weight="normal" fill="#e8f0f8" textLength="28" lengthAdjust="spacingAndGlyphs" >Kerala State Lotteries</text><g transform="translate(157,21) scale(0.9)"><ellipse cx="11" cy="8" rx="10" ry="5" fill="#4cae4c"/><circle cx="4" cy="7" r="4" fill="#4cae4c"/><path d="M3 12 L1 17 M9 12 L8 17 M15 12 L17 17 M19 9 L22 16" stroke="#4cae4c" stroke-width="1.3"/></g><text x="178" y="26" font-size="5" font-weight="normal" fill="#90a8c0" textLength="11" lengthAdjust="spacingAndGlyphs" >ker</text><text x="113" y="56" font-size="19" font-weight="bold" fill="#48c8e0" textLength="75" lengthAdjust="spacingAndGlyphs" >bhagyakuri</text><text x="117" y="75" font-size="17" font-weight="bold" fill="#48c8e0" textLength="66" lengthAdjust="spacingAndGlyphs" >narukedupp</text><rect x="132" y="81" width="29.6" height="15" fill="#e0302a"/><text x="135.0" y="93.3" font-size="14.2" fill="#fff" textLength="23.7" lengthAdjust="spacingAndGlyphs">LIVE</text><path d="M161.6 88.5 L170.0 81.0 L170.0 96.0 Z" fill="#e0302a"/><text x="132.0" y="103.0" font-size="6.5" fill="#f0f4f8" textLength="36.1" lengthAdjust="spacingAndGlyphs">STREAMING</text><text x="128" y="110" font-size="6" font-weight="bold" fill="#f0f4f8" textLength="47" lengthAdjust="spacingAndGlyphs" >ella thingal</text>
<circle cx="2" cy="120" r="2" fill="#3a78d8"/><circle cx="6" cy="120" r="2" fill="#e03030"/>
</svg></div>
<div class="a lt" style="top:937px">Win Win(W-799)</div>
<svg class="cal" style="left:2008px;top:1010px" width="30" height="34" viewBox="0 0 30 34"><path fill="#575757" fill-rule="evenodd" d="M5 0h3v4h14V0h3v4h1.5A3.5 3.5 0 0 1 30 7.5v23A3.5 3.5 0 0 1 26.5 34h-23A3.5 3.5 0 0 1 0 30.5v-23A3.5 3.5 0 0 1 3.5 4H5z M3.2 14v16h23.6V14z"/><g fill="#575757"><rect x="6.8" y="17" width="3.3" height="3.3"/><rect x="13.3" y="17" width="3.3" height="3.3"/><rect x="19.8" y="17" width="3.3" height="3.3"/><rect x="6.8" y="23.8" width="3.3" height="3.3"/><rect x="13.3" y="23.8" width="3.3" height="3.3"/><rect x="19.8" y="23.8" width="3.3" height="3.3"/></g></svg>
<div class="a ld" style="top:1013px">09/12/2024</div>
<div class="div" style="top:1082px"></div>
<div class="th" id="t5" style="top:1108px"><svg width="189" height="128" viewBox="0 0 189 128" font-family="Liberation Sans" font-weight="bold"><defs>
<linearGradient id="s51" x1="0" y1="0" x2="1" y2="1"><stop offset="0" stop-color="#f0e0c4"/><stop offset="1" stop-color="#e8d4b6"/></linearGradient>
</defs>
<rect width="189" height="128" fill="url(#s51)"/>
<path d="M0 0 L72 0 C60 8 40 6 30 16 C22 24 12 22 0 30 Z" fill="#e8782e"/>
<path d="M0 0 L40 0 C30 6 18 8 0 18 Z" fill="#f09848"/>
<path d="M0 0 L72 0 C60 8 40 6 30 16 C22 24 12 22 0 30" fill="none" stroke="#5a2a18" stroke-width="0.8"/>
<path d="M160 4 C176 2 189 10 189 10 L189 40 C180 34 168 20 160 4 Z" fill="#d84a2a"/>
<path d="M186 14 C168 14 154 24 150 40 C146 56 152 66 150 78 C148 92 146 100 154 108 C160 114 170 110 176 100 L189 96 L189 14 Z" fill="#221a1c"/>
<path d="M176 34 C168 36 163 44 162 52 L158 60 L162 62 L161 68 C161 72 164 74 166 73 L165 77 C166 82 172 84 178 80 C184 74 186 60 184 48 C183 40 180 34 176 34 Z" fill="#f0d2b4"/>
<path d="M161 69 C163 70 166 71 167 70" stroke="#c03030" stroke-width="2" fill="none"/>
<path d="M166 56 C168 55 171 55 172 57" stroke="#2a1a1a" stroke-width="0.8" fill="none"/>
<ellipse cx="180" cy="62" rx="8" ry="5.5" fill="#2a7a70" transform="rotate(-30 180 62)"/>
<path d="M178 30 C186 40 189 50 189 70 L189 90 C182 80 184 60 178 30 Z" fill="#d8582e"/>
<path d="M104 128 C112 112 126 104 144 100 C164 96 178 100 189 108 L189 128 Z" fill="#d8582e"/>
<path d="M120 128 C128 116 140 108 156 106 C170 106 182 114 189 122 L189 128 Z" fill="#e8743e"/>
<ellipse cx="129" cy="104" rx="12" ry="7" fill="#2a7a70" transform="rotate(-50 129 104)"/>
<ellipse cx="112" cy="122" rx="6" ry="5" fill="#1a1818"/>
<g fill="#8a6a50" opacity="0.6"><circle cx="140" cy="40" r="0.8"/><circle cx="144" cy="48" r="0.8"/><circle cx="136" cy="56" r="0.8"/><circle cx="130" cy="70" r="0.8"/><circle cx="122" cy="84" r="0.8"/><circle cx="138" cy="78" r="0.8"/><circle cx="146" cy="30" r="0.8"/><circle cx="118" cy="92" r="0.8"/></g>
<path d="M0 112 C8 108 14 116 12 128 L0 128 Z" fill="#2a7a70"/>
<circle cx="137" cy="14" r="8" fill="none" stroke="#5a9a90" stroke-width="2.5"/><circle cx="137" cy="14" r="3" fill="#4aa0a8"/>
<g fill="none" stroke="#7a6a50" stroke-width="1"><ellipse cx="71.5" cy="14.899999999999999" rx="8.55" ry="4.2"/><ellipse cx="71.5" cy="14.899999999999999" rx="4.75" ry="3.08"/></g><rect x="63.9" y="20.5" width="15.200000000000001" height="0.84" fill="#7a6a50"/><rect x="62" y="22.6" width="19" height="0.84" fill="#7a6a50"/><text x="44" y="30" font-size="4" font-weight="normal" fill="#7a6a50" textLength="53" lengthAdjust="spacingAndGlyphs" >KERALA STATE LOTTERIES DEPARTMENT</text><text x="31" y="37" font-size="5" font-weight="bold" fill="#7a6a50" textLength="73" lengthAdjust="spacingAndGlyphs" >vijnanam saubhagyam</text><text x="36" y="50" font-size="9" font-weight="bold" fill="#4a3a2a" textLength="63" lengthAdjust="spacingAndGlyphs" >kerala lottari</text><text x="21" y="69" font-size="19" font-weight="bold" fill="#9a2a7a" textLength="88" lengthAdjust="spacingAndGlyphs" >sthreeshakthi</text><text x="44" y="84" font-size="8" font-weight="bold" fill="#2a2420" textLength="45" lengthAdjust="spacingAndGlyphs" >bhagyakuri</text><text x="36" y="95" font-size="12" font-weight="bold" fill="#2a2420" textLength="60" lengthAdjust="spacingAndGlyphs" >narukkedupp</text><text x="41" y="105" font-size="5" font-weight="bold" fill="#3a3028" textLength="53" lengthAdjust="spacingAndGlyphs" >ella chovva</text>
<rect x="0" y="80" width="20" height="12" fill="#e0302a"/><path d="M20 86 L26 80 L26 92 Z" fill="#e0302a"/><text x="0" y="90" font-size="11" font-weight="bold" fill="#fff" textLength="18" lengthAdjust="spacingAndGlyphs" >VE</text><text x="0" y="101" font-size="4.5" font-weight="bold" fill="#3a3028" textLength="22" lengthAdjust="spacingAndGlyphs" >EAMING</text><text x="0" y="60" font-size="4" font-weight="normal" fill="#3a3028" textLength="12" lengthAdjust="spacingAndGlyphs" >kerala</text></svg></div>
<div class="a lt" style="top:1115px">Sthree Sakthi(SS-445)</div>
<svg class="cal" style="left:2008px;top:1188px" width="30" height="34" viewBox="0 0 30 34"><path fill="#575757" fill-rule="evenodd" d="M5 0h3v4h14V0h3v4h1.5A3.5 3.5 0 0 1 30 7.5v23A3.5 3.5 0 0 1 26.5 34h-23A3.5 3.5 0 0 1 0 30.5v-23A3.5 3.5 0 0 1 3.5 4H5z M3.2 14v16h23.6V14z"/><g fill="#575757"><rect x="6.8" y="17" width="3.3" height="3.3"/><rect x="13.3" y="17" width="3.3" height="3.3"/><rect x="19.8" y="17" width="3.3" height="3.3"/><rect x="6.8" y="23.8" width="3.3" height="3.3"/><rect x="13.3" y="23.8" width="3.3" height="3.3"/><rect x="19.8" y="23.8" width="3.3" height="3.3"/></g></svg>
<div class="a ld" style="top:1191px">10/12/2024</div>
<div class="div" style="top:1260px"></div>
<div class="th" id="t6" style="top:1286px"><svg width="189" height="128" viewBox="0 0 189 128" font-family="Liberation Sans" font-weight="bold"><defs>
<linearGradient id="f61" x1="0" y1="0" x2="1" y2="1"><stop offset="0" stop-color="#d85a36"/><stop offset="1" stop-color="#d2553a"/></linearGradient>
</defs>
<rect width="189" height="128" fill="url(#f61)"/>
<path d="M0 104 C60 112 130 110 189 96 L189 128 L0 128 Z" fill="#7a3a20"/>
<path d="M0 107 C60 115 130 113 189 99 L189 128 L0 128 Z" fill="#f8f8f6"/>
<g fill="none" stroke="#5a2a18" stroke-width="1.2"><circle cx="4" cy="28" r="3.5"/><circle cx="184" cy="8" r="4"/><circle cx="186" cy="30" r="2.5"/></g>
<path d="M20 62 C14 80 30 90 60 96 C80 100 88 110 88 122" stroke="#f8e8d8" stroke-width="0.8" stroke-dasharray="1.5 1.5" fill="none"/>
<path d="M24 60 L20 66 L27 66 Z" fill="#f8e8d8"/>
<g transform="translate(41,11) scale(0.9)"><ellipse cx="11" cy="8" rx="10" ry="5" fill="#5ab04a"/><circle cx="4" cy="7" r="4" fill="#5ab04a"/><path d="M3 12 L1 17 M9 12 L8 17 M15 12 L17 17 M19 9 L22 16" stroke="#5ab04a" stroke-width="1.3"/></g><text x="62" y="18" font-size="6" font-weight="bold" fill="#8a4a30" textLength="20" lengthAdjust="spacingAndGlyphs" >kerala</text><text x="62" y="25" font-size="6" font-weight="bold" fill="#8a4a30" textLength="27" lengthAdjust="spacingAndGlyphs" >bhagyakuri</text><g fill="none" stroke="#f4c8a8" stroke-width="1"><ellipse cx="153.0" cy="30.6" rx="9.9" ry="4.8"/><ellipse cx="153.0" cy="30.6" rx="5.5" ry="3.52"/></g><rect x="144.2" y="37.0" width="17.6" height="0.96" fill="#f4c8a8"/><rect x="142" y="39.4" width="22" height="0.96" fill="#f4c8a8"/><text x="136" y="46" font-size="4" font-weight="normal" fill="#f8d8c0" textLength="28" lengthAdjust="spacingAndGlyphs" >Kerala State</text>
<text x="23" y="58" font-size="39" fill="#e8903a" textLength="84" lengthAdjust="spacingAndGlyphs">FIFTY</text>
<text x="21" y="56" font-size="39" fill="#3a6a68" textLength="84" lengthAdjust="spacingAndGlyphs">FIFTY</text>
<text x="24" y="54" font-size="38" fill="#f4f6dc" textLength="82" lengthAdjust="spacingAndGlyphs">FIFTY</text>
<text x="44" y="91" font-size="39" fill="#e8903a" textLength="76" lengthAdjust="spacingAndGlyphs">FIFTY</text>
<text x="42" y="89" font-size="39" fill="#3a6a68" textLength="76" lengthAdjust="spacingAndGlyphs">FIFTY</text>
<text x="45" y="87" font-size="38" fill="#f4f6dc" textLength="74" lengthAdjust="spacingAndGlyphs">FIFTY</text>
<text x="130" y="69" font-size="9" font-weight="bold" fill="#fff4ec" textLength="46" lengthAdjust="spacingAndGlyphs" >bhagyakuri</text><text x="128" y="80" font-size="11" font-weight="bold" fill="#fff4ec" textLength="51" lengthAdjust="spacingAndGlyphs" >narukedupp</text><text x="128" y="91" font-size="6" font-weight="bold" fill="#fff4ec" textLength="52" lengthAdjust="spacingAndGlyphs" >ella budhan</text><rect x="139" y="101" width="21.1" height="11" fill="#e0302a"/><text x="141.1" y="110.0" font-size="10.4" fill="#fff" textLength="16.8" lengthAdjust="spacingAndGlyphs">LIVE</text><path d="M160.1 106.5 L166.0 101.0 L166.0 112.0 Z" fill="#e0302a"/><text x="139.0" y="118.0" font-size="5.9" fill="#3a2a20" textLength="25.6" lengthAdjust="spacingAndGlyphs">STREAMING</text>
<g><circle cx="2" cy="116" r="2" fill="#3a68c8"/><circle cx="8" cy="116" r="2" fill="#c84898"/><circle cx="14" cy="116" r="2" fill="#48a0d8"/><circle cx="20" cy="116" r="2" fill="#c83838"/></g><text x="0" y="123" font-size="3.5" font-weight="normal" fill="#4a4a4a" textLength="48" lengthAdjust="spacingAndGlyphs" >e-mail: cru.dir.lotteries@kerala.gov.in</text><text x="0" y="127" font-size="3.5" font-weight="normal" fill="#4a4a4a" textLength="50" lengthAdjust="spacingAndGlyphs" >website: statelottery.kerala.gov.in</text></svg></div>
<div class="a lt" style="top:1293px">Fifty Fifty(FF-120)</div>
<svg class="cal" style="left:2008px;top:1366px" width="30" height="34" viewBox="0 0 30 34"><path fill="#575757" fill-rule="evenodd" d="M5 0h3v4h14V0h3v4h1.5A3.5 3.5 0 0 1 30 7.5v23A3.5 3.5 0 0 1 26.5 34h-23A3.5 3.5 0 0 1 0 30.5v-23A3.5 3.5 0 0 1 3.5 4H5z M3.2 14v16h23.6V14z"/><g fill="#575757"><rect x="6.8" y="17" width="3.3" height="3.3"/><rect x="13.3" y="17" width="3.3" height="3.3"/><rect x="19.8" y="17" width="3.3" height="3.3"/><rect x="6.8" y="23.8" width="3.3" height="3.3"/><rect x="13.3" y="23.8" width="3.3" height="3.3"/><rect x="19.8" y="23.8" width="3.3" height="3.3"/></g></svg>
<div class="a ld" style="top:1369px">11/12/2024</div>
<div class="div" style="top:1438px"></div>
<div class="th" id="t7" style="top:1464px"><svg width="189" height="128" viewBox="0 0 189 128" font-family="Liberation Sans" font-weight="bold"><defs>
<linearGradient id="p71" x1="0" y1="0" x2="1" y2="1"><stop offset="0" stop-color="#eeeded"/><stop offset="1" stop-color="#e6e4e4"/></linearGradient>
</defs>
<rect width="189" height="128" fill="url(#p71)"/>
<path d="M150 10 C165 20 180 40 189 60 L189 20 Z" fill="#dcdcdc" opacity="0.6"/>
<path d="M110 70 C118 62 128 66 134 76 L136 84 L128 90 C120 84 112 80 110 70 Z" fill="#d8a888"/>
<rect x="136" y="80" width="40" height="32" fill="#f0f0f0" opacity="0.7"/>
<polygon points="166.5,39.0 161.2,48.1 150.8,48.1 145.5,39.0 150.8,29.9 161.2,29.9" fill="#48b8c0" stroke="#e8f4f4" stroke-width="0.8"/><polygon points="149.5,49.0 144.2,58.1 133.8,58.1 128.5,49.0 133.8,39.9 144.2,39.9" fill="#48b8c4" stroke="#e8f4f4" stroke-width="0.8"/><polygon points="183.5,49.0 178.2,58.1 167.8,58.1 162.5,49.0 167.8,39.9 178.2,39.9" fill="#48b8c0" stroke="#e8f4f4" stroke-width="0.8"/><polygon points="166.5,59.0 161.2,68.1 150.8,68.1 145.5,59.0 150.8,49.9 161.2,49.9" fill="#40b0b8" stroke="#e8f4f4" stroke-width="0.8"/><polygon points="149.5,69.0 144.2,78.1 133.8,78.1 128.5,69.0 133.8,59.9 144.2,59.9" fill="#48b8c4" stroke="#e8f4f4" stroke-width="0.8"/><polygon points="183.5,69.0 178.2,78.1 167.8,78.1 162.5,69.0 167.8,59.9 178.2,59.9" fill="#70c8d0" stroke="#e8f4f4" stroke-width="0.8"/><polygon points="166.5,79.0 161.2,88.1 150.8,88.1 145.5,79.0 150.8,69.9 161.2,69.9" fill="#60c0c8" stroke="#e8f4f4" stroke-width="0.8"/>
<path d="M152 59 h8 M156 55 v8" stroke="#fff" stroke-width="2"/>
<g transform="translate(24,28) scale(1.05)"><ellipse cx="11" cy="8" rx="10" ry="5" fill="#4cae4c"/><circle cx="4" cy="7" r="4" fill="#4cae4c"/><path d="M3 12 L1 17 M9 12 L8 17 M15 12 L17 17 M19 9 L22 16" stroke="#4cae4c" stroke-width="1.3"/></g><text x="49" y="35" font-size="6.5" font-weight="bold" fill="#6a6a6a" textLength="16" lengthAdjust="spacingAndGlyphs" >kerala</text><text x="49" y="42" font-size="6.5" font-weight="bold" fill="#6a6a6a" textLength="34" lengthAdjust="spacingAndGlyphs" >bhagyakuri</text><g fill="none" stroke="#6a6a6a" stroke-width="1"><ellipse cx="180.5" cy="16.9" rx="7.65" ry="4.2"/><ellipse cx="180.5" cy="16.9" rx="4.25" ry="3.08"/></g><rect x="173.7" y="22.5" width="13.600000000000001" height="0.84" fill="#6a6a6a"/><rect x="172" y="24.6" width="17" height="0.84" fill="#6a6a6a"/><text x="164" y="31" font-size="3.5" font-weight="normal" fill="#555" textLength="25" lengthAdjust="spacingAndGlyphs" >Kerala State</text>
<path d="M18 52 L102 48 L104 80 L20 84 Z" fill="#1e1e1e"/>
<path d="M14 48 L22 48 M14 48 L14 58 M110 76 L110 86 L100 86" stroke="#444" stroke-width="0.8" fill="none"/>
<text x="26" y="75" font-size="24" fill="#fafafa" stroke="#fafafa" stroke-width="0.5" textLength="66" lengthAdjust="spacingAndGlyphs">karuo</text>
<path d="M64 76 L92 70 L96 90 L68 96 Z" fill="#48b8c4"/>
<text x="72" y="88" font-size="9" font-weight="bold" fill="#fff" textLength="18" lengthAdjust="spacingAndGlyphs" font-style="italic">plus</text><text x="23" y="93" font-size="7" font-weight="bold" fill="#2a2a2a" textLength="36" lengthAdjust="spacingAndGlyphs" >bhagyakuri</text><text x="23" y="104" font-size="12" font-weight="bold" fill="#1a1a1a" textLength="61" lengthAdjust="spacingAndGlyphs" >narukkedupp</text><text x="26" y="112" font-size="4.5" font-weight="bold" fill="#7a3a3a" textLength="45" lengthAdjust="spacingAndGlyphs" >ella vyazham</text><rect x="141" y="89" width="29.6" height="14.5" fill="#e0302a"/><text x="144.0" y="100.9" font-size="13.8" fill="#fff" textLength="23.7" lengthAdjust="spacingAndGlyphs">LIVE</text><path d="M170.6 96.2 L179.0 89.0 L179.0 103.5 Z" fill="#e0302a"/><text x="141.0" y="111.5" font-size="7.2" fill="#2a2a2a" textLength="36.1" lengthAdjust="spacingAndGlyphs">STREAMING</text>
<circle cx="6" cy="120" r="2.3" fill="none" stroke="#c83838" stroke-width="1"/><text x="16" y="121" font-size="3" font-weight="normal" fill="#666" textLength="98" lengthAdjust="spacingAndGlyphs" >e-mail: cru.dir.lotteries@kerala.gov.in  website: statelottery.kerala.gov.in</text></svg></div>
<div class="a lt" style="top:1471px">Karunya Plus(KN-551)</div>
<svg class="cal" style="left:2008px;top:1544px" width="30" height="34" viewBox="0 0 30 34"><path fill="#575757" fill-rule="evenodd" d="M5 0h3v4h14V0h3v4h1.5A3.5 3.5 0 0 1 30 7.5v23A3.5 3.5 0 0 1 26.5 34h-23A3.5 3.5 0 0 1 0 30.5v-23A3.5 3.5 0 0 1 3.5 4H5z M3.2 14v16h23.6V14z"/><g fill="#575757"><rect x="6.8" y="17" width="3.3" height="3.3"/><rect x="13.3" y="17" width="3.3" height="3.3"/><rect x="19.8" y="17" width="3.3" height="3.3"/><rect x="6.8" y="23.8" width="3.3" height="3.3"/><rect x="13.3" y="23.8" width="3.3" height="3.3"/><rect x="19.8" y="23.8" width="3.3" height="3.3"/></g></svg>
<div class="a ld" style="top:1547px">12/12/2024</div>
</body></html>
